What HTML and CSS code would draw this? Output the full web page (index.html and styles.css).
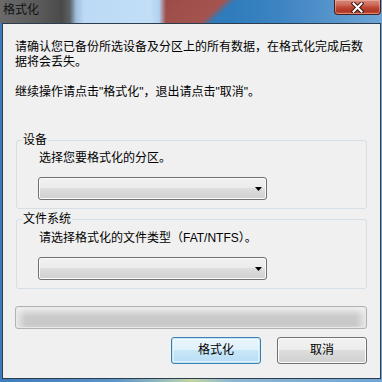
FILE: index.html
```html
<!DOCTYPE html>
<html lang="zh-CN">
<head>
<meta charset="utf-8">
<title>格式化</title>
<link rel="stylesheet" href="styles.css">
</head>
<body>
<div class="window">
  <div class="titlebar">
    <span class="title">格式化</span>
    <span class="close">
      <svg width="13" height="11" viewBox="0 0 13 11">
        <path d="M2.5 1.5 L10.5 9.5 M10.5 1.5 L2.5 9.5" stroke="#3a1410" stroke-width="4" stroke-linecap="square"/>
        <path d="M2.5 1.5 L10.5 9.5 M10.5 1.5 L2.5 9.5" stroke="#ffffff" stroke-width="2" stroke-linecap="square"/>
      </svg>
    </span>
  </div>
  <div class="client">
    <p class="message">请确认您已备份所选设备及分区上的所有数据，在格式化完成后数据将会丢失。<br><br>继续操作请点击"格式化"，退出请点击"取消"。</p>

    <fieldset class="group">
      <legend class="group-label">设备</legend>
      <div class="group-body">
        <div class="hint">选择您要格式化的分区。</div>
        <div class="select">
          <svg class="arrow" width="7" height="4" viewBox="0 0 7 4"><polygon points="0,0 7,0 3.5,4" fill="#000"/></svg>
        </div>
      </div>
    </fieldset>

    <fieldset class="group group-fs">
      <legend class="group-label">文件系统</legend>
      <div class="group-body">
        <div class="hint">请选择格式化的文件类型（FAT/NTFS）。</div>
        <div class="select">
          <svg class="arrow" width="7" height="4" viewBox="0 0 7 4"><polygon points="0,0 7,0 3.5,4" fill="#000"/></svg>
        </div>
      </div>
    </fieldset>

    <div class="progress"></div>

    <div class="actions">
      <button class="btn btn-default" type="button">格式化</button>
      <button class="btn" type="button">取消</button>
    </div>
  </div>
</div>
</body>
</html>
```

FILE: styles.css
```css
html, body {
  margin: 0;
  padding: 0;
}

body {
  width: 382px;
  height: 382px;
  overflow: hidden;
  font-family: "Liberation Sans", "Noto Sans CJK SC", sans-serif;
  font-size: 12px;
  line-height: 15px;
  color: #000;
  background-color: #4f88c2;
  background-image: linear-gradient(to right, #3d7cbc 0, #5d93c6 30%, #a3c4b8 45%, #c4d4a2 50%, #8fb7cf 60%, #6fa5d6 100%);
}

.window {
  display: flex;
  flex-direction: column;
  height: 382px;
}

.titlebar {
  height: 23px;
  flex: none;
  display: flex;
  justify-content: space-between;
  align-items: flex-start;
  background-color: #2f7bbb;
  background-image:
    linear-gradient(to right, #6a6a6a 0, #5a5a5a 40px, #4a4a4a 62px, #5d6166 70px, #9dbddb 76px, #bcdaf5 84px, #c2def7 150px, #b4d2ee 159px, rgba(180, 210, 238, 0) 166px),
    linear-gradient(137deg, #9c4a46 0, #a45450 44px, rgba(164, 84, 80, 0) 52px),
    linear-gradient(to right, #2e78b8 0, #2f7bbb 230px, #3d84c2 280px, #5593cb 330px, #6ea5d6 382px);
  background-size: 100% 100%, 100px 23px, 100% 100%;
  background-position: 0 0, 160px 0, 0 0;
  background-repeat: no-repeat;
}

.title {
  padding: 3px 0 0 3px;
  color: #111;
}

.close {
  width: 47px;
  height: 15px;
  margin-right: 1px;
  box-sizing: border-box;
  border: 1px solid #4a1e1c;
  border-top: none;
  border-radius: 0 0 4px 4px;
  display: flex;
  align-items: center;
  justify-content: center;
  background: linear-gradient(to bottom, #d88a7c 0, #cc6a5a 35%, #c04a38 50%, #b03524 80%, #c65a40 100%);
  box-shadow: inset 0 0 0 1px rgba(255, 200, 190, 0.45);
}

.close svg {
  display: block;
}

.client {
  flex: 1;
  margin: 0 1px 3px 2px;
  border: 1px solid #2c3d50;
  background: #f0f0f0;
  display: flex;
  flex-direction: column;
  align-items: flex-start;
}

.message {
  margin: 16px 0 0 12px;
  width: 352px;
}

.group {
  margin: 33px 0 0 13px;
  padding: 0;
  width: 351px;
  box-sizing: border-box;
  border: 1px solid #d5dfe5;
  border-radius: 3px;
  min-inline-size: 0;
}

.group-fs {
  margin-top: 3px;
}

.group-label {
  margin-left: 5px;
  padding: 0 1px;
  line-height: 15px;
}

.group-body {
  padding: 3px 0 8px 21px;
}

.group-fs .group-body {
  padding-top: 4px;
}

.hint {
  margin-left: 1px;
}

.select {
  width: 229px;
  height: 23px;
  margin-top: 11px;
  box-sizing: border-box;
  border: 1px solid #707070;
  border-radius: 3px;
  background: linear-gradient(to bottom, #f2f2f2 0, #ebebeb 50%, #dddddd 50%, #cfcfcf 100%);
  box-shadow: inset 0 0 0 1px #fbfbfb;
  display: flex;
  align-items: center;
  justify-content: flex-end;
}

.arrow {
  display: block;
  margin-right: 4px;
}

.progress {
  margin: 17px 0 0 12px;
  width: 352px;
  height: 23px;
  box-sizing: border-box;
  border: 1px solid #b2b2b2;
  border-radius: 3px;
  background:
    linear-gradient(to right, rgba(240, 240, 240, 0.8) 0, rgba(240, 240, 240, 0) 10px, rgba(240, 240, 240, 0) calc(100% - 10px), rgba(240, 240, 240, 0.8) 100%),
    linear-gradient(to bottom, #f3f3f3 0, #dedede 20%, #cbcbcb 45%, #c8c8c8 80%, #d2d2d2 100%);
  box-shadow: inset 0 0 0 1px #e8e8e8;
}

.actions {
  align-self: stretch;
  display: flex;
  justify-content: flex-end;
  gap: 16px;
  margin: 8px 13px 0 0;
}

.btn {
  width: 90px;
  height: 27px;
  margin: 0;
  padding: 0;
  box-sizing: border-box;
  font: inherit;
  color: #000;
  border: 1px solid #707070;
  border-radius: 3px;
  background: linear-gradient(to bottom, #f2f2f2 0, #ebebeb 50%, #dddddd 50%, #cfcfcf 100%);
  box-shadow: inset 0 0 0 1px #fcfcfc;
}

.btn-default {
  border-color: #3c7fb1;
  background: linear-gradient(to bottom, #eaf6fd 0, #dff1fb 50%, #c8e7f8 50%, #b8ddf3 100%);
  box-shadow: inset 0 0 0 1px #bfe6fb, inset 0 0 0 2px rgba(255, 255, 255, 0.5);
}
```
